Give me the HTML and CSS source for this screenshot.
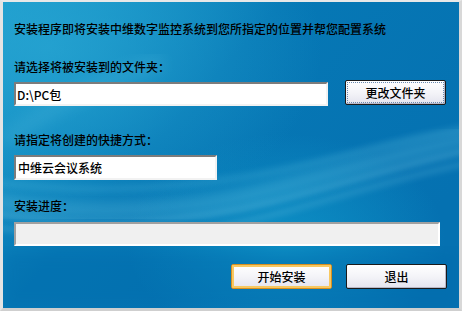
FILE: index.html
```html
<!DOCTYPE html>
<html>
<head>
<meta charset="utf-8">
<link rel="stylesheet" href="styles.css">
</head>
<body>
<div class="window">
  <svg class="bg" width="456" height="306" viewBox="0 0 456 306" preserveAspectRatio="none">
    <defs>
      <linearGradient id="base" x1="0" y1="0" x2="1" y2="0.6">
        <stop offset="0" stop-color="#1a9acb"/>
        <stop offset="0.45" stop-color="#0678b5"/>
        <stop offset="1" stop-color="#0571b1"/>
      </linearGradient>
      <radialGradient id="tl" cx="0.1" cy="0.15" r="0.6">
        <stop offset="0" stop-color="#2aa8d4" stop-opacity="0.7"/>
        <stop offset="1" stop-color="#2aa8d4" stop-opacity="0"/>
      </radialGradient>
      <radialGradient id="br" cx="0.62" cy="0.78" r="0.35">
        <stop offset="0" stop-color="#0f96c9" stop-opacity="0.8"/>
        <stop offset="1" stop-color="#0f96c9" stop-opacity="0"/>
      </radialGradient>
      <filter id="b3"><feGaussianBlur stdDeviation="3"/></filter>
      <filter id="b6"><feGaussianBlur stdDeviation="7"/></filter>
    </defs>
    <rect width="456" height="306" fill="url(#base)"/>
    <rect width="456" height="306" fill="url(#tl)"/>
    <rect width="456" height="306" fill="url(#br)"/>
    <rect x="0" y="250" width="456" height="56" fill="#0569aa" opacity="0.35" filter="url(#b6)"/>
    <path d="M-10 200 C 80 215, 180 210, 260 190 S 400 150, 470 135" stroke="#6fcbe6" stroke-width="14" fill="none" opacity="0.35" filter="url(#b6)"/>
    <path d="M-10 212 C 90 228, 190 220, 270 200 S 410 160, 470 148" stroke="#8ad8ee" stroke-width="4" fill="none" opacity="0.35" filter="url(#b3)"/>
    <path d="M-10 225 C 90 240, 200 232, 280 210 S 410 172, 470 160" stroke="#7fd0ea" stroke-width="5" fill="none" opacity="0.25" filter="url(#b3)"/>
    <path d="M-10 180 C 60 190, 150 190, 240 175 S 380 140, 470 125" stroke="#5ec0e0" stroke-width="6" fill="none" opacity="0.25" filter="url(#b3)"/>
    <path d="M0 140 C 40 110, 90 80, 160 60" stroke="#5fc2e2" stroke-width="18" fill="none" opacity="0.18" filter="url(#b6)"/>
  </svg>
  <div class="content">
    <div class="text line1">安装程序即将安装中维数字监控系统到您所指定的位置并帮您配置系统</div>
    <div class="text line2">请选择将被安装到的文件夹：</div>
    <div class="row1">
      <input class="field path" type="text" value="D:\PC包">
      <button class="btn focus">更改文件夹</button>
    </div>
    <div class="text line3">请指定将创建的快捷方式：</div>
    <input class="field shortcut" type="text" value="中维云会议系统">
    <div class="text line4">安装进度：</div>
    <div class="progress"></div>
    <div class="actions">
      <button class="btn default">开始安装</button>
      <button class="btn">退出</button>
    </div>
  </div>
</div>
</body>
</html>
```

FILE: styles.css
```css
html, body {
  margin: 0;
  padding: 0;
  background: #ffffff;
}
.window {
  width: 462px;
  height: 311px;
  box-sizing: border-box;
  border-top: 2px solid #e8e8e8;
  border-left: 3px solid #e4e4e4;
  border-right: 3px solid #d8d8d8;
  border-bottom: 3px solid #cfcfcf;
  box-shadow: inset -1px -1px 0 #8a8a8a;
  display: grid;
  overflow: hidden;
  font-family: "Noto Sans CJK SC", "Liberation Sans", sans-serif;
  font-size: 12px;
  font-weight: 500;
  color: #000;
}
.bg {
  grid-area: 1 / 1;
  display: block;
}
.content {
  grid-area: 1 / 1;
  display: flex;
  flex-direction: column;
  padding-left: 11px;
  padding-right: 12px;
}
.text {
  height: 14px;
  line-height: 14px;
  white-space: nowrap;
}
.line1 { margin-top: 20px; }
.line2 { margin-top: 24px; }
.row1 {
  margin-top: 6px;
  display: flex;
  align-items: flex-start;
  height: 26px;
}
.field {
  box-sizing: border-box;
  margin: 0;
  background: #fff;
  font-family: "Noto Sans CJK SC", "Liberation Sans", sans-serif;
  font-size: 12px;
  font-weight: 500;
  color: #000;
  border-style: solid;
  border-width: 2px;
  border-color: #7c7c7c #f2f2f2 #f2f2f2 #7c7c7c;
  outline: none;
}
.path {
  margin-top: 2px;
  width: 314px;
  height: 24px;
  padding: 0 1px;
}
.row1 .btn { margin-left: 17px; }
.line3 { margin-top: 27px; }
.shortcut {
  margin-top: 8px;
  width: 203px;
  height: 25px;
  padding: 0 2px;
}
.line4 { margin-top: 19px; }
.progress {
  margin-top: 9px;
  width: 426px;
  height: 24px;
  box-sizing: border-box;
  background: #f0f0f0;
  border-style: solid;
  border-width: 2px;
  border-color: #a0a0a0 #ffffff #ffffff #a0a0a0;
}
.actions {
  margin-top: 18px;
  display: flex;
  justify-content: flex-end;
  gap: 14px;
}
.btn {
  width: 101px;
  height: 25px;
  box-sizing: border-box;
  margin: 0;
  padding: 0;
  border: 1px solid #1a1a1a;
  border-radius: 2px;
  background: linear-gradient(#ffffff, #f4f4f8 50%, #e4e4ee);
  font-family: "Noto Sans CJK SC", "Liberation Sans", sans-serif;
  font-size: 12px;
  font-weight: 500;
  color: #000;
  line-height: 21px;
  box-shadow: inset -1px -1px 0 #b8b8c8;
}
.focus {
  outline: 1px dotted #6a8ab0;
  outline-offset: -3px;
}
.default {
  border: 1px solid #d89020;
  box-shadow: inset 0 0 0 2px #f8c860;
}
```
